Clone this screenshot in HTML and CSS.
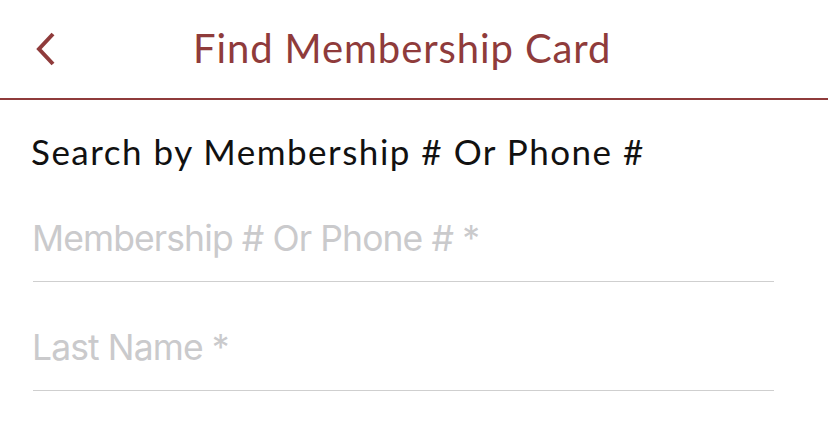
FILE: index.html
```html
<!DOCTYPE html>
<html>
<head>
<meta charset="utf-8">
<link rel="stylesheet" href="styles.css">
</head>
<body>
<header class="nav">
  <button class="back" aria-label="Back">
    <svg width="24" height="36" viewBox="0 0 24 36"><path d="M20 3 L6 18 L20 33" fill="none" stroke="#8f3b3b" stroke-width="4" stroke-linecap="butt" stroke-linejoin="miter"/></svg>
  </button>
  <h1 class="title">Find Membership Card</h1>
</header>
<main class="content">
  <p class="label">Search by Membership # Or Phone #</p>
  <div class="field first"><input class="input" type="text" placeholder="Membership # Or Phone # *"></div>
  <div class="field"><input class="input" type="text" placeholder="Last Name *"></div>
</main>
</body>
</html>
```
FILE: styles.css
```css
html, body { margin: 0; padding: 0; background: #fff; }
body { width: 828px; height: 440px; overflow: hidden; }
.nav {
  height: 98px;
  border-bottom: 2px solid #8f3b3b;
  display: flex;
  align-items: center;
  padding-left: 33px;
  box-sizing: content-box;
}
.back {
  border: 0; background: none; padding: 0; margin: 0;
  width: 24px; height: 36px; display: flex; align-items: center;
}
.title {
  margin: -2px 0 0 136px;
  font-family: Lato, "Open Sans", sans-serif;
  font-weight: 400;
  font-size: 40px;
  color: #8f3b3b;
  letter-spacing: 0.9px;
  line-height: 1;
}
.content { padding: 0 54px 0 31px; }
.label {
  margin: 0;
  padding-top: 30px;
  font-family: Lato, "Open Sans", sans-serif;
  font-size: 35px;
  line-height: 42px;
  color: #111;
  letter-spacing: 1.5px;
}
.field {
  border-bottom: 1.5px solid #cfcfcf;
  margin-left: 2px;
  height: 108px;
  display: flex;
  align-items: flex-end;
}
.field.first { height: 109px; }
.input {
  border: 0; outline: none; background: transparent;
  width: 100%;
  margin: 0 0 20px -1px; padding: 0;
  font-family: Inter, Roboto, sans-serif;
  font-size: 35.5px;
  line-height: 44px;
  letter-spacing: -0.9px;
  color: #333;
}
.input::placeholder { color: #cacacc; }
```
